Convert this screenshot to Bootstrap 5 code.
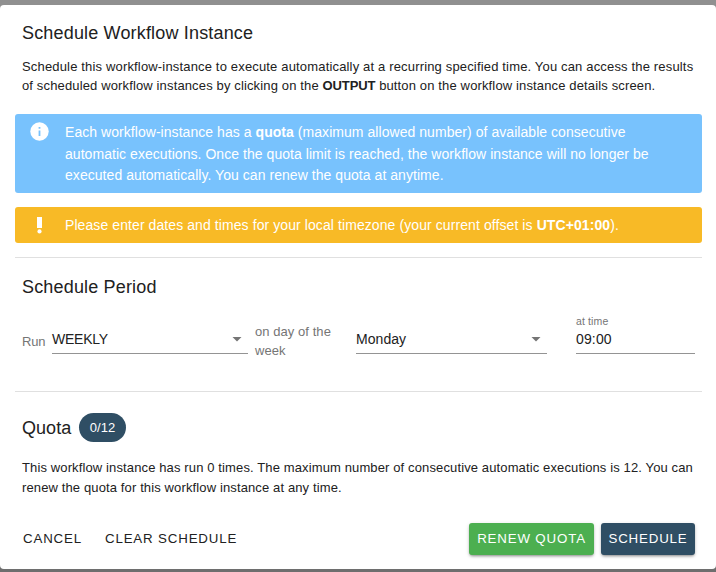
<!DOCTYPE html>
<html lang="en">
<head>
<meta charset="utf-8">
<meta name="viewport" content="width=device-width, initial-scale=1">
<title>Schedule Workflow Instance</title>
<link href="https://cdn.jsdelivr.net/npm/bootstrap@5.3.0/dist/css/bootstrap.min.css" rel="stylesheet">
<script src="https://cdn.jsdelivr.net/npm/bootstrap@5.3.0/dist/js/bootstrap.bundle.min.js" defer></script>
<style>
body{font-family:"Liberation Sans",Arial,sans-serif;font-size:14px;line-height:21.5px;color:#212121;overflow:hidden}
.page-wrap{height:572px;padding:5px 0 3px;background:linear-gradient(#909090 50%,#6e6e6e 50%)}
.dialog-sheet{height:564px;background:#fff;border-radius:4px;padding:0 14px 0 15px}
.header-block{height:109px;padding:14px 7px 0}
.dialog-title{font-size:18px;line-height:28px;letter-spacing:.17px;margin:0;font-weight:400}
.body-copy{font-size:13px;line-height:19px;letter-spacing:.165px;margin:0}
.header-block .body-copy{margin-top:10px}
.second-line{letter-spacing:.14px}
.second-line b{letter-spacing:-.1px}
.notice{border-radius:3px;color:#fff;padding:7px 7px 7px 12px;letter-spacing:.05px}
.notice-info{background:#78c2fd;height:79px}
.notice-warn{background:#f8ba26;height:36px;margin-top:14px;letter-spacing:.085px}
.notice svg{width:25px;height:21px;flex:none}
.notice-text{margin:1px 0 0 13px}
.rule{height:1px;background:#e0e0e0}
.rule-a{margin-top:14px}
.rule-b{margin-top:15px}
.period-title{margin:15px 7px 0}
.period-row{margin:13px 7px 0;height:62px}
.hint{color:#757575}
.run-label{margin-top:18px;width:30px;letter-spacing:-.2px}
.day-label{margin:8px 0 0 7px;width:101px;letter-spacing:.06px}
.field{border-bottom:1px solid #949494;height:28px;line-height:26px;font-size:14px;letter-spacing:.05px;margin-top:12px;padding-bottom:2px;color:#212121}
.field svg{width:10px;height:5px;margin:1px 6px 0 0}
.field-cycle{width:196px;letter-spacing:-.25px}
.field-day{width:191px}
.time-col{margin-left:29px;width:119px;padding-top:1px}
.time-col .field{margin-top:-1px;letter-spacing:.15px}
.time-label{font-size:10.5px;line-height:12px;letter-spacing:.12px}
.quota-row{margin:21px 7px 0;gap:7px}
.quota-row .dialog-title{width:50px;letter-spacing:.05px}
.quota-pill{background:#2f4e64;color:#fff;border-radius:14.5px;width:47px;height:29px;line-height:29px;font-size:13px}
.quota-copy{margin:16px 7px 0;line-height:20px;letter-spacing:.125px}
.action-row{margin-top:25px;padding:0 7px 0 8px}
.action{height:32px;border:0;border-radius:3px;padding:0;font-size:13.3px;line-height:32px;letter-spacing:.84px;color:#212121}
.clear-btn{margin-left:23px}
.raised{color:#fff;box-shadow:0 2px 3px -1px #0006,0 1px 4px #0002}
.renew{background:#4caf50;width:125px}
.submit{background:#2f4e64;width:94px;margin-left:7px}
</style>
</head>
<body>
<div class="page-wrap">
<main class="dialog-sheet d-flex flex-column">
  <div class="header-block">
    <h1 class="dialog-title">Schedule Workflow Instance</h1>
    <p class="body-copy text-nowrap">Schedule this workflow-instance to execute automatically at a recurring specified time. You can access the results<br><span class="second-line">of scheduled workflow instances by clicking on the <b>OUTPUT</b> button on the workflow instance details screen.</span></p>
  </div>
  <div class="notice notice-info d-flex">
    <svg viewBox="0 0 25 21"><circle cx="12.5" cy="10.5" r="9.2" fill="#fff"/><path d="M11.6 6h1.8v1.8h-1.8zM11.6 9.6h1.8V15h-1.8z" fill="#78c2fd"/></svg>
    <div class="notice-text text-nowrap">Each workflow-instance has a <b>quota</b> (maximum allowed number) of available consecutive<br>automatic executions. Once the quota limit is reached, the workflow instance will no longer be<br>executed automatically. You can renew the quota at anytime.</div>
  </div>
  <div class="notice notice-warn d-flex">
    <svg viewBox="0 0 25 21"><path d="M10 3h5v11h-5z" fill="#fff"/><circle cx="12.5" cy="17.4" r="2.1" fill="#fff"/></svg>
    <div class="notice-text text-nowrap">Please enter dates and times for your local timezone (your current offset is <b>UTC+01:00</b>).</div>
  </div>
  <div class="rule rule-a"></div>
  <h2 class="dialog-title period-title">Schedule Period</h2>
  <div class="period-row d-flex body-copy">
    <span class="hint run-label">Run</span>
    <div class="field field-cycle d-flex align-items-center justify-content-between"><span>WEEKLY</span><svg viewBox="0 0 10 5"><path d="M.5 0h9L5 4.5z" fill="#757575"/></svg></div>
    <span class="hint day-label text-nowrap">on day of the<br>week</span>
    <div class="field field-day d-flex align-items-center justify-content-between"><span>Monday</span><svg viewBox="0 0 10 5"><path d="M.5 0h9L5 4.5z" fill="#757575"/></svg></div>
    <div class="time-col"><div class="hint time-label">at time</div><div class="field">09:00</div></div>
  </div>
  <div class="rule rule-b"></div>
  <div class="quota-row d-flex align-items-center"><h2 class="dialog-title">Quota</h2><span class="quota-pill text-center">0/12</span></div>
  <p class="body-copy quota-copy text-nowrap">This workflow instance has run 0 times. The maximum number of consecutive automatic executions is 12. You can<br>renew the quota for this workflow instance at any time.</p>
  <div class="action-row d-flex">
    <button type="button" class="btn action">CANCEL</button>
    <button type="button" class="btn action clear-btn">CLEAR SCHEDULE</button>
    <button type="button" class="btn action raised renew ms-auto">RENEW QUOTA</button>
    <button type="button" class="btn action raised submit">SCHEDULE</button>
  </div>
</main>
</div>
</body>
</html>
